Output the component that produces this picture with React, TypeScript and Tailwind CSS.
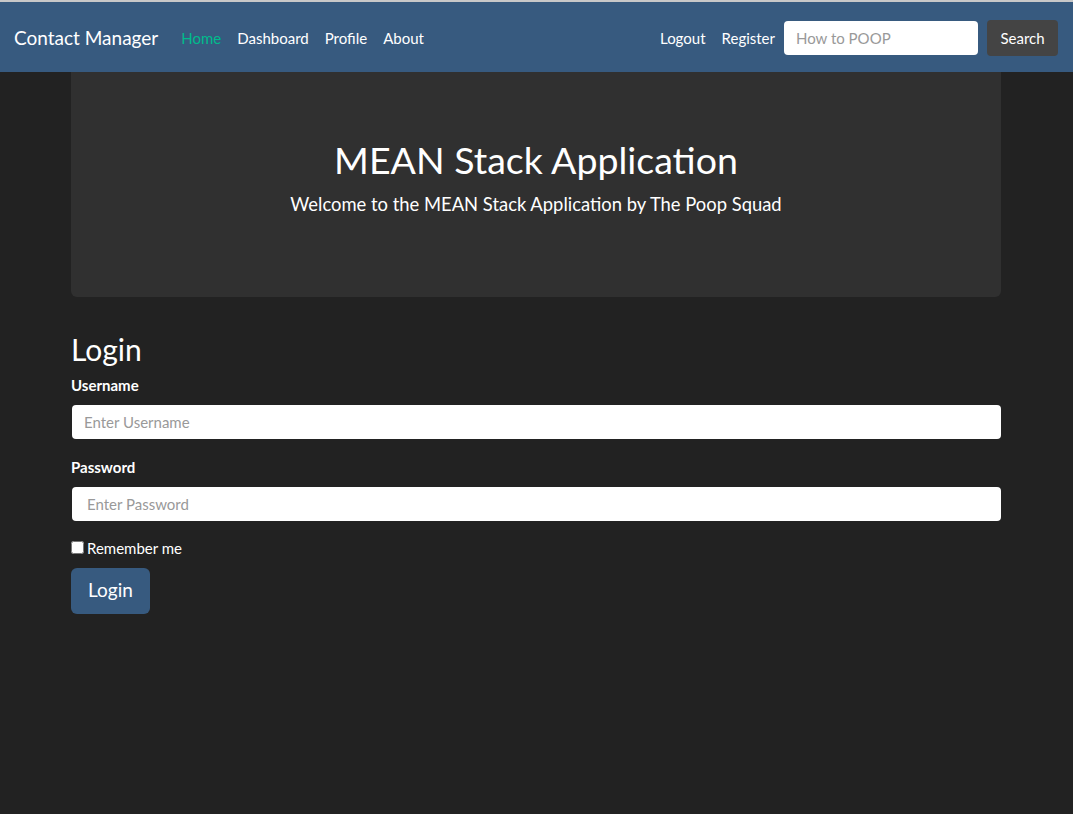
export default function App() {
  return (
    <div className="min-h-[814px] bg-[#222222] font-['Lato','Noto_Sans',sans-serif] text-white">
      <div className="h-[2px] bg-[#c8c8c8]" />
      <nav className="flex h-[70px] items-center bg-[#375a7f] pl-[14px] pr-[15px] pt-[2px]">
        <span className="text-[19px]">Contact Manager</span>
        <div className="ml-[23px] flex gap-[16px] text-[15px]">
          <a className="text-[#00bc8c]">Home</a>
          <a>Dashboard</a>
          <a>Profile</a>
          <a>About</a>
        </div>
        <div className="ml-auto flex items-center text-[15px]">
          <a>Logout</a>
          <a className="ml-[16px]">Register</a>
          <input
            className="ml-[9px] h-[34px] w-[194px] rounded-[4px] bg-white px-[12px] text-[15px] text-[#222] placeholder:text-[#999] outline-none"
            placeholder="How to POOP"
          />
          <button className="ml-[9px] h-[36px] w-[71px] rounded-[4px] bg-[#444444] text-[15px]">
            Search
          </button>
        </div>
      </nav>
      <div className="ml-[71px] w-[930px]">
        <div className="flex h-[225px] flex-col items-center rounded-b-[6px] bg-[#303030] pt-[64px]">
          <h1 className="text-[37.5px] leading-[48px]">MEAN Stack Application</h1>
          <p className="mt-[7px] text-[18.4px]">Welcome to the MEAN Stack Application by The Poop Squad</p>
        </div>
        <h2 className="mt-[32px] text-[30px] leading-[40px]">Login</h2>
        <form>
          <label className="mt-[5px] block text-[15px] font-bold">Username</label>
          <input
            className="mt-[8px] block h-[34px] w-[929px] ml-[1px] rounded-[4px] bg-white px-[12px] text-[15px] text-[#222] placeholder:text-[#999] outline-none"
            placeholder="Enter Username"
          />
          <label className="mt-[17px] block text-[15px] font-bold">Password</label>
          <input
            type="password"
            className="mt-[9px] block h-[34px] w-[929px] ml-[1px] rounded-[4px] bg-white px-[15px] text-[15px] text-[#222] placeholder:text-[#999] outline-none"
            placeholder="Enter Password"
          />
          <label className="mt-[15px] flex items-center text-[15px]">
            <input type="checkbox" className="m-0 h-[13px] w-[13px]" />
            <span className="ml-[3px] pt-[1px]">Remember me</span>
          </label>
          <button
            type="button"
            className="mt-[8px] h-[46px] rounded-[6px] bg-[#375a7f] px-[17px] text-[19px]"
          >
            Login
          </button>
        </form>
      </div>
    </div>
  );
}
